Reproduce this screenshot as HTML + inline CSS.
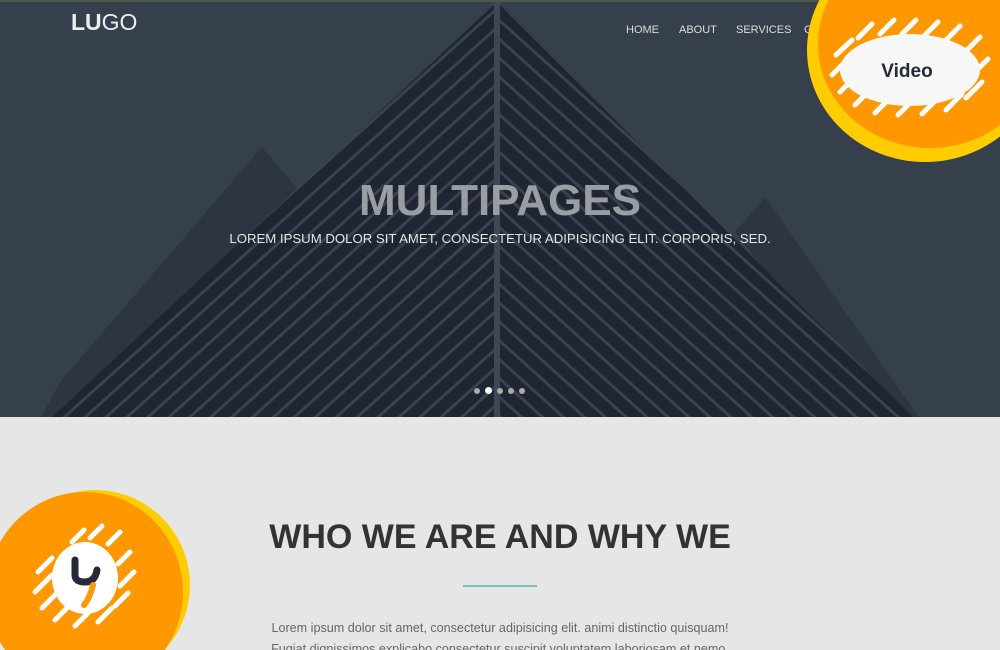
<!DOCTYPE html>
<html><head><meta charset="utf-8"><style>
*{margin:0;padding:0;box-sizing:border-box}
html,body{width:1000px;height:650px;overflow:hidden}
body{background:#e6e6e6;font-family:"Liberation Sans",sans-serif;position:relative}
.hero{position:absolute;left:0;top:0;width:1000px;height:417px;background:#36404c;border-top:2px solid #4a5a48;overflow:hidden}
.abs{position:absolute}
</style></head><body>
<div class="hero">
<svg class="abs" style="left:0;top:0" width="1000" height="417">
 <defs>
  <pattern id="pl" width="14" height="14" patternUnits="userSpaceOnUse" patternTransform="rotate(-42)">
   <rect width="14" height="14" fill="#1f2631"/><rect width="14" height="3" fill="#39424f"/>
  </pattern>
  <pattern id="pr" width="14" height="14" patternUnits="userSpaceOnUse" patternTransform="rotate(42)">
   <rect width="14" height="14" fill="#1f2631"/><rect width="14" height="3" fill="#39424f"/>
  </pattern>
 </defs>
 <polygon points="262,145 300,190 150,417 40,417 60,380" fill="#2c3541"/>
 <polygon points="765,195 735,230 880,417 920,417" fill="#2c3541"/>
 <polygon points="497,0 497,417 50,417" fill="url(#pl)"/>
 <polygon points="497,0 915,417 497,417" fill="url(#pr)"/>
 <line x1="497" y1="0" x2="497" y2="417" stroke="#3e4754" stroke-width="6"/>
</svg>
<div class="abs" style="left:71px;top:7px;font-size:23px;color:#eee;letter-spacing:0px"><b>LU</b><span style="font-weight:300">GO</span></div>
<div class="abs" style="left:626px;top:22px;font-size:11px;color:#ddd">HOME</div>
<div class="abs" style="left:679px;top:22px;font-size:11px;color:#ddd">ABOUT</div>
<div class="abs" style="left:736px;top:22px;font-size:11px;color:#ddd">SERVICES</div>
<div class="abs" style="left:804px;top:22px;font-size:11px;color:#ddd">GALLERY</div>
<div class="abs" style="left:0;width:1000px;top:174px;text-align:center;font-size:44px;font-weight:bold;color:#9a9ea4">MULTIPAGES</div>
<div class="abs" style="left:0;width:1000px;top:229px;text-align:center;font-size:13.2px;color:#e6e6e6">LOREM IPSUM DOLOR SIT AMET, CONSECTETUR ADIPISICING ELIT. CORPORIS, SED.</div>
<div class="abs" style="left:474px;top:385px;display:flex;gap:5px;align-items:center">
 <i style="width:6px;height:6px;border-radius:50%;background:#aaa"></i><i style="width:7px;height:7px;border-radius:50%;background:#fff"></i><i style="width:6px;height:6px;border-radius:50%;background:#aaa"></i><i style="width:6px;height:6px;border-radius:50%;background:#aaa"></i><i style="width:6px;height:6px;border-radius:50%;background:#aaa"></i>
</div>
</div>
<div class="abs" style="left:0;width:1000px;top:518px;text-align:center;font-size:34px;font-weight:bold;color:#333">WHO WE ARE AND WHY WE</div>
<div class="abs" style="left:463px;top:585px;width:74px;height:2px;background:#7fc0bc"></div>
<div class="abs" style="left:0;width:1000px;top:621px;text-align:center;font-size:12.6px;color:#666">Lorem ipsum dolor sit amet, consectetur adipisicing elit. animi distinctio quisquam!</div>
<div class="abs" style="left:0;width:1000px;top:642px;text-align:center;font-size:12.6px;color:#666;height:8px;overflow:hidden">Fugiat dignissimos explicabo consectetur suscipit voluptatem laboriosam et nemo.</div>
<!-- top right badge -->
<svg class="abs" style="left:800px;top:0" width="200" height="170">
 <ellipse cx="125" cy="50" rx="118" ry="112" fill="#ffcc00"/>
 <ellipse cx="130" cy="44" rx="112" ry="104" fill="#ff9800"/>
 <g stroke="#fff" stroke-width="5" stroke-linecap="round">
  <line x1="36" y1="55" x2="52" y2="40"/><line x1="32" y1="75" x2="50" y2="57"/><line x1="40" y1="92" x2="58" y2="74"/>
  <line x1="55" y1="105" x2="72" y2="88"/><line x1="75" y1="113" x2="90" y2="98"/><line x1="98" y1="115" x2="112" y2="101"/>
  <line x1="122" y1="114" x2="136" y2="100"/><line x1="146" y1="110" x2="162" y2="94"/><line x1="166" y1="98" x2="182" y2="82"/>
  <line x1="58" y1="38" x2="72" y2="24"/><line x1="80" y1="34" x2="94" y2="20"/><line x1="102" y1="34" x2="116" y2="20"/>
  <line x1="124" y1="36" x2="138" y2="22"/><line x1="146" y1="40" x2="160" y2="26"/><line x1="165" y1="52" x2="180" y2="37"/><line x1="175" y1="72" x2="188" y2="59"/>
 </g>
 <ellipse cx="110" cy="70" rx="70" ry="36" fill="#f7f7f7"/>
 <text x="107" y="77" text-anchor="middle" font-family="Liberation Sans,sans-serif" font-weight="bold" font-size="19" fill="#252a36">Video</text>
</svg>
<!-- bottom left badge -->
<svg class="abs" style="left:0;top:480px" width="200" height="170">
 <ellipse cx="95" cy="105" rx="95" ry="95" fill="#ffcc00"/>
 <ellipse cx="85" cy="112" rx="98" ry="100" fill="#ff9800"/>
 <g stroke="#fff" stroke-width="5" stroke-linecap="round">
  <line x1="38" y1="92" x2="52" y2="78"/><line x1="35" y1="112" x2="52" y2="95"/><line x1="42" y1="128" x2="58" y2="112"/>
  <line x1="55" y1="140" x2="70" y2="125"/><line x1="75" y1="146" x2="90" y2="131"/><line x1="98" y1="142" x2="112" y2="128"/>
  <line x1="72" y1="62" x2="84" y2="50"/><line x1="90" y1="58" x2="102" y2="46"/><line x1="108" y1="64" x2="120" y2="52"/>
  <line x1="118" y1="84" x2="130" y2="72"/><line x1="120" y1="106" x2="134" y2="92"/><line x1="115" y1="126" x2="128" y2="113"/>
 </g>
 <ellipse cx="85" cy="98" rx="33" ry="36" fill="#fff"/>
 <path d="M75 80 V95 Q75 102 85 102 Q95 102 97 90" stroke="#252a36" stroke-width="7" fill="none" stroke-linecap="round"/>
 <path d="M93 105 Q90 118 84 125" stroke="#ff9800" stroke-width="6" fill="none" stroke-linecap="round"/>
</svg>
</body></html>
